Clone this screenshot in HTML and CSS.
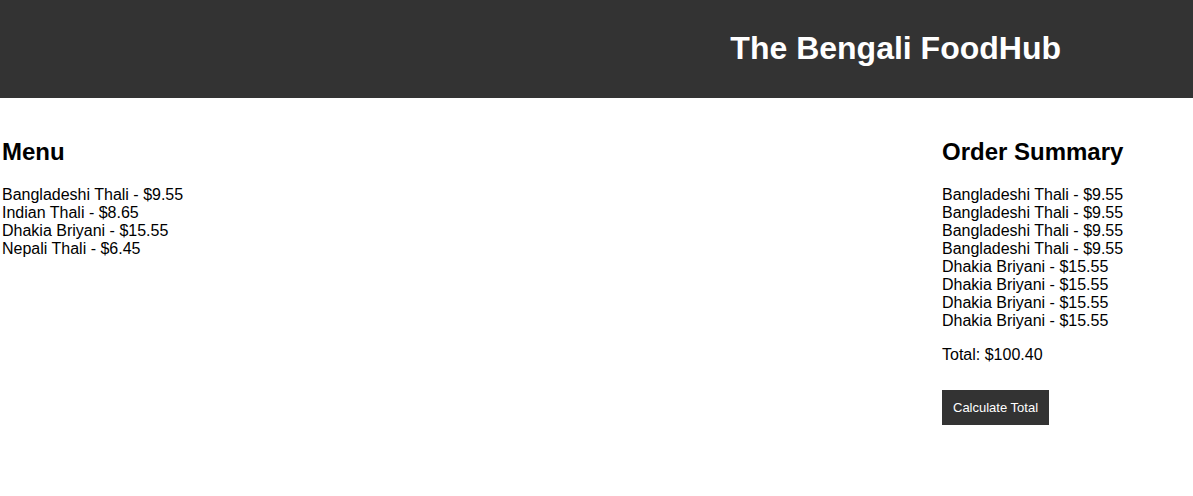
FILE: index.html
```html
<!DOCTYPE html>
<html lang="en">
<head>
<meta charset="utf-8">
<title>The Bengali FoodHub</title>
<link rel="stylesheet" href="styles.css">
</head>
<body>
<header class="site-header">
  <h1 class="site-title">The Bengali FoodHub</h1>
</header>
<main class="layout">
  <section class="menu">
    <h2 class="section-title">Menu</h2>
    <ul class="item-list">
      <li>Bangladeshi Thali - $9.55</li>
      <li>Indian Thali - $8.65</li>
      <li>Dhakia Briyani - $15.55</li>
      <li>Nepali Thali - $6.45</li>
    </ul>
  </section>
  <section class="order">
    <h2 class="section-title">Order Summary</h2>
    <ul class="item-list">
      <li>Bangladeshi Thali - $9.55</li>
      <li>Bangladeshi Thali - $9.55</li>
      <li>Bangladeshi Thali - $9.55</li>
      <li>Bangladeshi Thali - $9.55</li>
      <li>Dhakia Briyani - $15.55</li>
      <li>Dhakia Briyani - $15.55</li>
      <li>Dhakia Briyani - $15.55</li>
      <li>Dhakia Briyani - $15.55</li>
    </ul>
    <p class="total">Total: $100.40</p>
    <button class="calc-btn" type="button">Calculate Total</button>
  </section>
</main>
</body>
</html>
```

FILE: styles.css
```css
html, body {
  margin: 0;
  padding: 0;
  background: #fff;
  color: #000;
  font-family: "Liberation Sans", Arial, sans-serif;
  font-size: 16px;
}

.site-header {
  background: #333;
  color: #fff;
  height: 98px;
  display: flex;
  align-items: center;
  justify-content: flex-end;
  padding-right: 132px;
  box-sizing: border-box;
}

.site-title {
  margin: 0;
  font-size: 32px;
  font-weight: bold;
  line-height: 37px;
  position: relative;
  top: -1px;
}

.layout {
  display: grid;
  grid-template-columns: 940px 1fr;
  padding: 21px 0 0 2px;
}

.section-title {
  font-size: 24px;
  font-weight: bold;
  margin: 19px 0 21px;
  line-height: 27px;
}

.item-list {
  list-style: none;
  margin: 0;
  padding: 0;
  line-height: 18px;
}

.total {
  margin: 16px 0 0;
  line-height: 18px;
}

.calc-btn {
  display: block;
  margin-top: 26px;
  background: #333;
  color: #fff;
  border: none;
  padding: 10px 11px;
  font-family: "Liberation Sans", Arial, sans-serif;
  font-size: 13px;
  line-height: 15px;
  cursor: pointer;
}
```
